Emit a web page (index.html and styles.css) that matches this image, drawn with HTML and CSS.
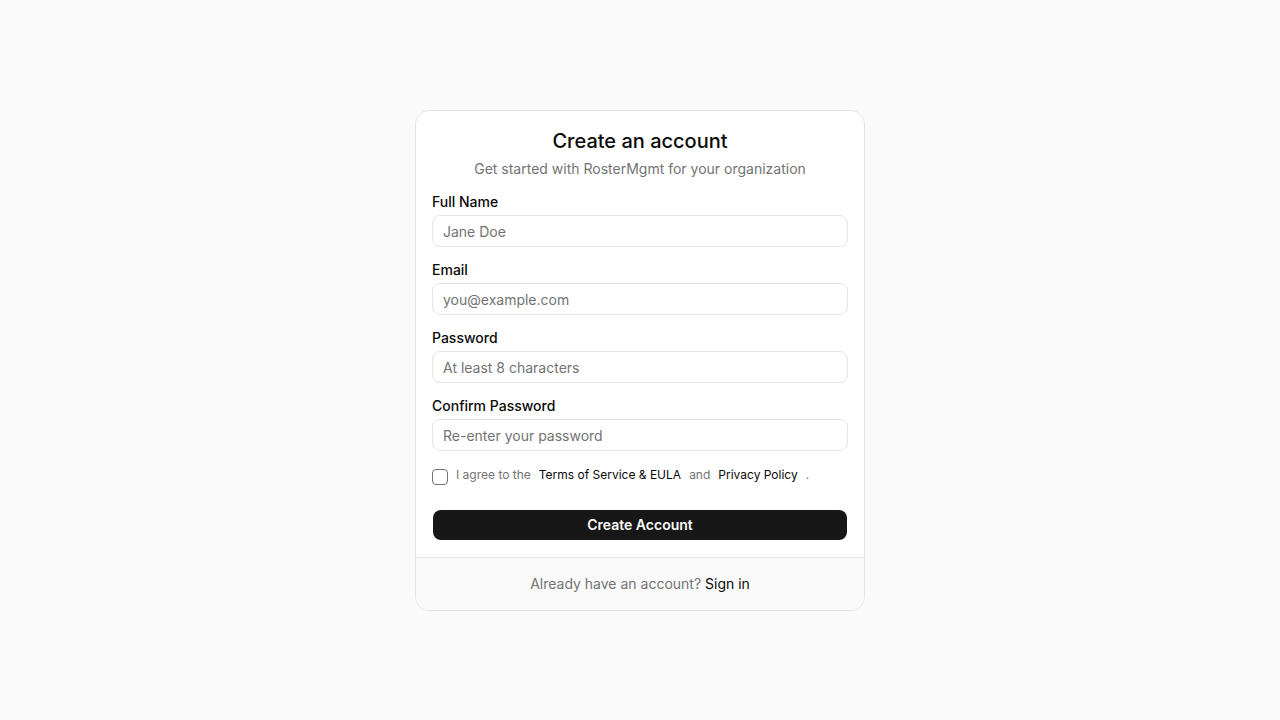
FILE: index.html
```html
<!DOCTYPE html>
<html lang="en">
<head>
<meta charset="utf-8">
<title>Create an account</title>
<link rel="stylesheet" href="styles.css">
</head>
<body>
<main class="page">
  <section class="card">
    <div class="card-body">
      <header class="card-header">
        <h1 class="title">Create an account</h1>
        <p class="subtitle">Get started with RosterMgmt for your organization</p>
      </header>
      <form class="form">
        <div class="field">
          <label class="label" for="name">Full Name</label>
          <input class="input" id="name" type="text" placeholder="Jane Doe">
        </div>
        <div class="field">
          <label class="label" for="email">Email</label>
          <input class="input" id="email" type="email" placeholder="you@example.com">
        </div>
        <div class="field">
          <label class="label" for="pw">Password</label>
          <input class="input" id="pw" type="password" placeholder="At least 8 characters">
        </div>
        <div class="field">
          <label class="label" for="pw2">Confirm Password</label>
          <input class="input" id="pw2" type="password" placeholder="Re-enter your password">
        </div>
        <div class="agree">
          <span class="checkbox"></span>
          <span class="muted">I agree to the</span>
          <a class="link" href="#">Terms of Service &amp; EULA</a>
          <span class="muted">and</span>
          <a class="link" href="#">Privacy Policy</a>
          <span class="muted">.</span>
        </div>
        <button class="submit" type="button">Create Account</button>
      </form>
    </div>
    <footer class="card-footer">
      <span class="muted-lg">Already have an account?</span>&nbsp;<a class="signin" href="#">Sign in</a>
    </footer>
  </section>
</main>
</body>
</html>
```

FILE: styles.css
```css
* { box-sizing: border-box; }
html, body { margin: 0; padding: 0; }
body {
  background: #fafafa;
  font-family: Inter, "Noto Sans", sans-serif;
  color: #0a0a0a;
  width: 1280px;
  height: 720px;
}
.page {
  display: flex;
  justify-content: center;
  padding-top: 110px;
}
.card {
  width: 450px;
  background: #ffffff;
  border: 1px solid #e5e5e5;
  border-radius: 14px;
  overflow: hidden;
}
.card-body {
  padding: 16px 16px 17px;
}
.card-header {
  display: flex;
  flex-direction: column;
  align-items: center;
  gap: 4px;
  margin-bottom: 13px;
}
.title {
  margin: 0;
  font-size: 20px;
  line-height: 28px;
  font-weight: 500;
  color: #0a0a0a;
}
.subtitle {
  margin: 0;
  font-size: 14px;
  line-height: 20px;
  color: #737373;
}
.form {
  display: flex;
  flex-direction: column;
  gap: 13px;
}
.field {
  display: flex;
  flex-direction: column;
  gap: 3px;
}
.label {
  font-size: 14px;
  line-height: 20px;
  font-weight: 500;
  color: #0a0a0a;
}
.input {
  height: 32px;
  width: 100%;
  border: 1px solid #e5e5e5;
  border-radius: 8px;
  padding: 0 10px;
  font-family: inherit;
  font-size: 14px;
  color: #0a0a0a;
  background: #ffffff;
  outline: none;
}
.input::placeholder { color: #737373; }
.agree {
  display: flex;
  align-items: flex-start;
  gap: 8px;
  margin-top: 3px;
  font-size: 12px;
  line-height: 16px;
}
.checkbox {
  width: 16px;
  height: 16px;
  border: 1px solid #737373;
  border-radius: 4px;
  margin-top: 2px;
  flex: none;
}
.muted { color: #737373; }
.link {
  color: #0a0a0a;
  text-decoration: none;
}
.submit {
  margin: 12px 1px 0;
  height: 30px;
  padding: 0 0 1px;
  border: none;
  border-radius: 8px;
  background: #171717;
  color: #fafafa;
  font-family: inherit;
  font-size: 14px;
  font-weight: 600;
}
.card-footer {
  border-top: 1px solid #e5e5e5;
  background: #fafafa;
  height: 53px;
  padding-bottom: 1px;
  display: flex;
  align-items: center;
  justify-content: center;
  font-size: 14px;
}
.muted-lg { color: #737373; }
.signin { color: #0a0a0a; text-decoration: none; }
```
